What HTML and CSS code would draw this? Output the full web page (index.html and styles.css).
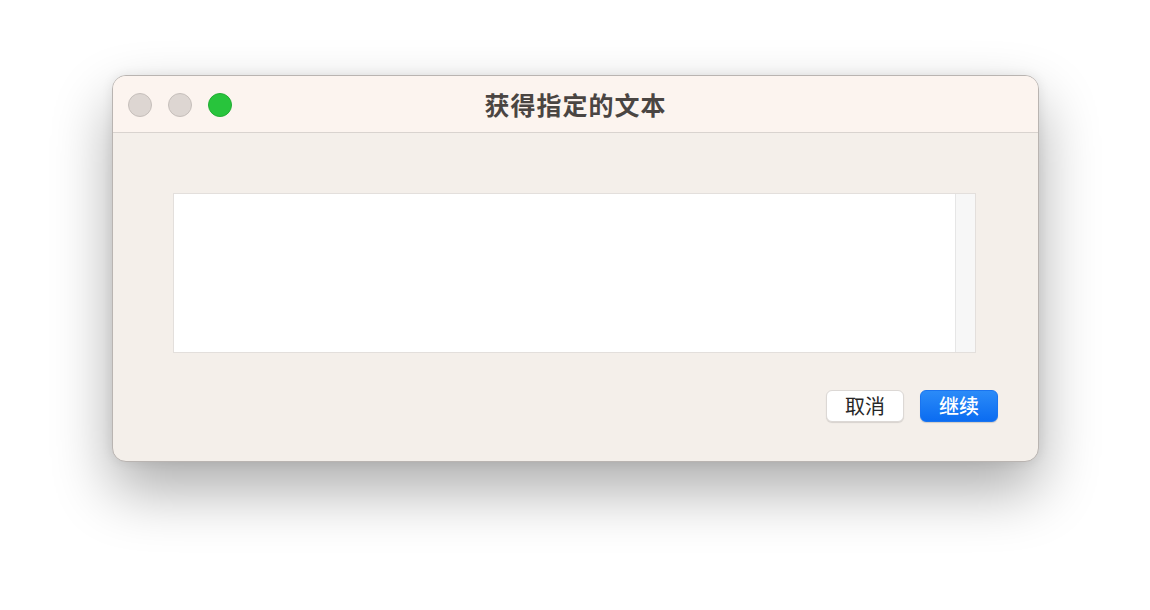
FILE: index.html
```html
<!DOCTYPE html>
<html lang="zh-CN">
<head>
<meta charset="utf-8">
<title>获得指定的文本</title>
<link rel="stylesheet" href="styles.css">
</head>
<body>
<div class="window">
  <div class="titlebar">
    <div class="lights">
      <span class="light gray"></span>
      <span class="light gray"></span>
      <span class="light green"></span>
    </div>
    <div class="title">获得指定的文本</div>
  </div>
  <div class="content">
    <div class="textbox">
      <div class="textarea"></div>
      <div class="scrolltrack"></div>
    </div>
    <div class="buttons">
      <button class="btn cancel">取消</button>
      <button class="btn primary">继续</button>
    </div>
  </div>
</div>
</body>
</html>
```
FILE: styles.css
```css
html, body {
  margin: 0;
  padding: 0;
  background: #ffffff;
  width: 1150px;
  height: 610px;
  overflow: hidden;
}
body {
  padding: 75px 0 0 112px;
  box-sizing: border-box;
  font-family: "Noto Sans CJK SC", "Noto Sans", sans-serif;
}
.window {
  width: 927px;
  height: 387px;
  box-sizing: border-box;
  border: 1px solid #b9b4b1;
  border-radius: 14px;
  background: #f4efea;
  overflow: hidden;
  display: flex;
  flex-direction: column;
  box-shadow: 0 28px 60px rgba(0,0,0,0.33), 0 0 12px rgba(0,0,0,0.08);
}
.titlebar {
  height: 57px;
  flex: none;
  box-sizing: border-box;
  background: #fcf4ef;
  border-bottom: 1px solid #d9d3cf;
  display: flex;
  align-items: center;
  position: relative;
}
.lights {
  display: flex;
  gap: 16px;
  padding-left: 15px;
  padding-top: 1px;
}
.light {
  width: 24px;
  height: 24px;
  box-sizing: border-box;
  border-radius: 50%;
}
.light.gray {
  background: #ddd6d2;
  border: 1px solid #c6bfbb;
}
.light.green {
  background: #28c43c;
  border: 1px solid #22ad33;
}
.title {
  position: absolute;
  left: 0;
  right: 0;
  top: 0;
  bottom: 0;
  display: flex;
  align-items: center;
  justify-content: center;
  font-size: 25px;
  font-weight: 700;
  color: #4a4542;
  letter-spacing: 1px;
  pointer-events: none;
}
.content {
  flex: 1;
  display: flex;
  flex-direction: column;
  padding: 60px 40px 39px 60px;
}
.textbox {
  display: flex;
  height: 158px;
  margin-right: 22px;
  border: 1px solid #e3dfdc;
  background: #ffffff;
}
.textarea {
  flex: 1;
  background: #ffffff;
}
.scrolltrack {
  width: 19px;
  background: #f7f7f7;
  border-left: 1px solid #e6e6e6;
}
.buttons {
  margin-top: auto;
  display: flex;
  justify-content: flex-end;
  gap: 16px;
}
.btn {
  width: 78px;
  height: 32px;
  border-radius: 6px;
  font-family: "Noto Sans CJK SC", "Noto Sans", sans-serif;
  font-size: 20px;
  line-height: 30px;
  padding: 0;
  cursor: default;
}
.btn.cancel {
  background: #ffffff;
  color: #262626;
  border: 1px solid #dcd8d5;
  box-shadow: 0 1px 1px rgba(0,0,0,0.12);
}
.btn.primary {
  background: linear-gradient(#2b8bf8, #0b6cf1);
  color: #ffffff;
  border: 1px solid #1a74ef;
  font-weight: 500;
  box-shadow: 0 1px 1px rgba(0,0,0,0.15);
}
```
